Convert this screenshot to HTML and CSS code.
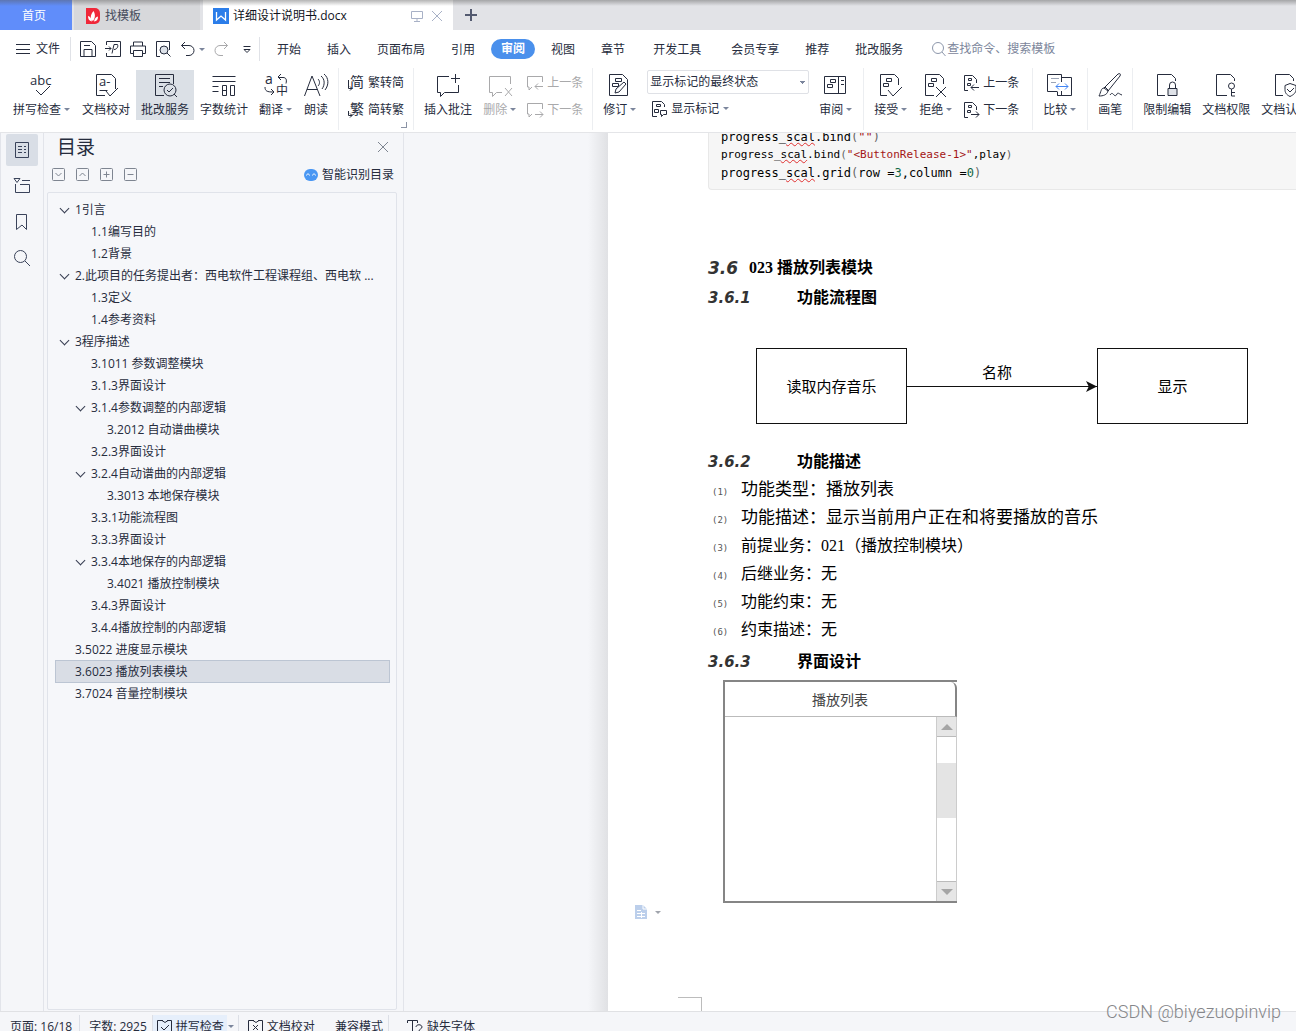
FILE: index.html
```html
<!DOCTYPE html>
<html lang="zh-CN">
<head>
<meta charset="utf-8">
<title>详细设计说明书.docx</title>
<link rel="stylesheet" href="styles.css">
</head>
<body>
<div class="app">
  <header class="tabbar">
    <button class="tab tab-home">首页</button>
    <button class="tab tab-find">
      <svg class="i16" viewBox="0 0 16 16" stroke="none"><path d="M1 0h9a5 5 0 0 1 5 5v6a5 5 0 0 1-5 5H1z" fill="#f0283a" stroke="none"/><path d="M8 13C5 11 5 7 8.500 3c2 3 2 7-.5 10zM7 13.500C4 13 3 11 3 8c2 .5 3.500 2 4 5.500zM9 13.500c.5-3 2-4.500 4-5 0 3-1 4.500-4 5z" fill="#fff" stroke="none"/></svg>
      <span>找模板</span>
    </button>
    <div class="tab tab-doc">
      <svg class="i16" viewBox="0 0 16 16"><path d="M0 0h16v16H0z" fill="#2b7de9" stroke="none"/><path d="M3.500 4v8L8 8l4.500 4V4" fill="none" stroke="#fff" stroke-width="1.300"/></svg>
      <span class="doc-name">详细设计说明书.docx</span>
      <svg class="i12 faint" viewBox="0 0 12 12"><path d="M.5 1.500h11v7H.5zM6 8.500v3M3 11.500h6"/></svg>
      <button class="bare" aria-label="关闭"><svg class="i12 faint" viewBox="0 0 12 12"><path d="M1 1l10 10M11 1L1 11"/></svg></button>
    </div>
    <button class="bare plus" aria-label="新建"><svg class="i12" viewBox="0 0 12 12"><path d="M6 0v12M0 6h12" stroke-width="2"/></svg></button>
  </header>

  <nav class="menubar">
    <button class="file-btn"><svg class="i14" viewBox="0 0 14 14"><path d="M0 2.500h14M0 7.500h14M0 11.500h14"/></svg>文件</button>
    <div class="quick">
      <button class="bare" aria-label="保存"><svg class="i16" viewBox="0 0 16 16"><path d="M.5.5h11l4 4v11H.5zM4 15.500v-7h8v7M4 4.500h6"/></svg></button>
      <button class="bare" aria-label="输出"><svg class="i16" viewBox="0 0 16 16"><path d="M1.500 4V.5h14v15h-14V12M0 7.500h6M4 5.500l2 2-2 2M7 12.500l2-9h3.500c1 2-.5 5-3.500 5"/></svg></button>
      <button class="bare" aria-label="打印"><svg class="i16" viewBox="0 0 16 16"><path d="M3.500 5V1h9v4M3.500 12.500h-3V5h15v7.500h-3M3.500 9.500h9v6h-9z"/></svg></button>
      <button class="bare" aria-label="预览"><svg class="i16" viewBox="0 0 16 16"><path d="M5 15.500H1.500V.5h13V9"/><circle cx="9" cy="9" r="4" fill="#dde2e9"/><path d="M12 12l3.500 3.500"/></svg></button>
      <button class="bare undo" aria-label="撤销"><svg class="i16" viewBox="0 0 16 16"><path d="M5 1L1.500 4.500 5 8M1.500 4.500H9a5 5 0 0 1 0 10H6"/></svg><i class="arr"></i></button>
      <button class="bare dim" aria-label="恢复"><svg class="i16" viewBox="0 0 16 16"><path d="M10 1l3.500 3.500L10 8M13.500 4.500H6a5 5 0 0 0 0 10h3"/></svg></button>
      <button class="bare" aria-label="更多"><svg class="i8" viewBox="0 0 8 8"><path d="M.5 1.500h7M1 4.500l3 3 3-3z"/></svg></button>
    </div>
    <button class="menu">开始</button><button class="menu">插入</button><button class="menu">页面布局</button><button class="menu">引用</button><button class="menu active">审阅</button><button class="menu">视图</button><button class="menu">章节</button><button class="menu spaced">开发工具</button><button class="menu">会员专享</button><button class="menu">推荐</button><button class="menu">批改服务</button>
    <label class="search"><svg class="i16" viewBox="0 0 16 16"><circle cx="7" cy="7" r="5.500"/><path d="M11 11l3.500 4"/></svg><input type="text" placeholder="查找命令、搜索模板" aria-label="查找命令"></label>
  </nav>

  <div class="ribbon">
    <div class="group first">
      <button class="cmd"><svg class="i24" viewBox="0 0 24 24"><text x="0" y="12" font-size="13">abc</text><path d="M6 17l5 5 9-9"/></svg><span>拼写检查<i class="arr"></i></span></button>
      <button class="cmd"><svg class="i24" viewBox="0 0 24 24"><path d="M11 22.500H2.500v-21h15l4 4V16M5.500 17.500h8M12 18l4 5 8-8"/><text x="5" y="13" font-size="13">a-</text></svg><span>文档校对</span></button>
      <button class="cmd on"><svg class="i24" viewBox="0 0 24 24"><path d="M11 22.500H2.500v-21h18V11M6 5.500h11M6 9.500h11M6 13.500h4"/><circle cx="17" cy="17" r="6"/><path d="M14 17l2 2 4-4M21 21l3 3"/></svg><span>批改服务</span></button>
      <button class="cmd"><svg class="i24" viewBox="0 0 24 24"><path d="M.5 3.500h23M.5 8.500h23M.5 13.500h6M.5 18.500h6M10.500 12.500h4v10h-4zM10.500 17.500h4M18.500 12.500h4v10h-4z"/></svg><span>字数统计</span></button>
      <button class="cmd"><svg class="i24" viewBox="0 0 24 24"><text x="1" y="11" font-size="14">a</text><text x="12" y="22" font-size="12">中</text><path d="M17 1l-3 3 3 3M14 4.500h5c3 0 4 2 3 6M1 14c0 4 2 5 8 5M7 16l3 3-3 3"/></svg><span>翻译<i class="arr"></i></span></button>
      <button class="cmd"><svg class="i24" viewBox="0 0 24 24"><path d="M.5 23L8 3l8 20M3 16.500h10.500M14 6c2 2 2 5 0 7M17 3c4 3 4 9 1 13M20 1c5 4 5 11 1 16"/></svg><span>朗读</span></button>
    </div>
    <div class="group corner">
      <div class="stack">
        <button class="mini"><svg class="i16" viewBox="0 0 16 16"><text x="2" y="12" font-size="14">简</text><path d="M.5 5v8.500H4M2 11.500l2 2-2 2"/></svg>繁转简</button>
        <button class="mini"><svg class="i16" viewBox="0 0 16 16"><text x="2" y="12" font-size="14">繁</text><path d="M.5 9v4.500H4M2 11.500l2 2-2 2"/></svg>简转繁</button>
      </div>
    </div>
    <div class="group">
      <button class="cmd"><svg class="i24" viewBox="0 0 24 24"><path d="M13 3.500H1.500v16h3v4l4-4h14V12M15 5.500h9M19.500 1v9"/></svg><span>插入批注</span></button>
      <button class="cmd dim"><svg class="i24" viewBox="0 0 24 24"><path d="M14 19.500H8.500l-4 4v-4h-3v-16h21V11M17 15l7 8M24 15l-7 8"/></svg><span>删除<i class="arr"></i></span></button>
      <div class="stack dim">
        <button class="mini"><svg class="i16" viewBox="0 0 16 16"><path d="M5 12l-3 3v-3H.5V1.500h15V7M16 11.500H8M11 8.500l-3 3 3 3"/></svg>上一条</button>
        <button class="mini"><svg class="i16" viewBox="0 0 16 16"><path d="M5 12l-3 3v-3H.5V1.500h15V7M8 12.500h8M13 9.500l3 3-3 3"/></svg>下一条</button>
      </div>
    </div>
    <div class="group">
      <button class="cmd"><svg class="i24" viewBox="0 0 24 24"><path d="M1.500 1.500h13l5 5v16h-18zM7.500 5.500h6v3h-6zM4.500 10.500h6v3h-6zM7 20l1-4 8-7 2 2-7 8z"/></svg><span>修订<i class="arr"></i></span></button>
      <div class="stack">
        <select class="state" aria-label="显示状态"><option>显示标记的最终状态</option></select>
        <button class="mini mark"><svg class="i16" viewBox="0 0 16 16"><path d="M6 15.500H1.500V.5h9l3 3V6M5.500 3.500h4v2h-4zM3.500 8.500h4v3h-4zM9.500 9.500h6v4h-3l-2 2v-2h-1z"/></svg>显示标记<i class="arr"></i></button>
      </div>
      <button class="cmd"><svg class="i24" viewBox="0 0 24 24"><path d="M.5 3.500h21v17H.5zM14.500 3.500v17M6.500 6.500h5v3h-5zM3.500 11.500h5v3h-5zM17 7.500h3M17 11.500h3"/></svg><span>审阅<i class="arr"></i></span></button>
    </div>
    <div class="group wide">
      <button class="cmd"><svg class="i24" viewBox="0 0 24 24"><path d="M8 22.500H1.500v-21h14l4 4V12M7.500 5.500h5v3h-5zM4.500 10.500h5v3h-5zM9 17l5 6 9-9"/></svg><span>接受<i class="arr"></i></span></button>
      <button class="cmd"><svg class="i24" viewBox="0 0 24 24"><path d="M10 22.500H1.500v-21h14l4 4V11M7.500 5.500h5v3h-5zM4.500 10.500h5v3h-5zM12 14l10 10M22 14L12 24"/></svg><span>拒绝<i class="arr"></i></span></button>
      <div class="stack">
        <button class="mini"><svg class="i16" viewBox="0 0 16 16"><path d="M5 15.500H1.500V.5h8l4 4V8M5.500 3.500h3v2h-3zM4.500 8.500h3v2h-3zM16 12.500H8M11 9.500l-3 3 3 3"/></svg>上一条</button>
        <button class="mini"><svg class="i16" viewBox="0 0 16 16"><path d="M5 15.500H1.500V.5h8l4 4V8M5.500 3.500h3v2h-3zM4.500 8.500h3v2h-3zM8 12.500h8M13 9.500l3 3-3 3"/></svg>下一条</button>
      </div>
    </div>
    <div class="group">
      <button class="cmd"><svg class="i24" viewBox="0 0 24 24"><path d="M9 18.500H-.5v-17h14v21H9.500v-4M13.500 4.500h10v18h-14"/><path d="M10 9h10v9H10z" fill="#fff" stroke="none"/><path d="M3 5.500h8M3 9.500h5" stroke="#9aa3b5"/><path d="M8 13.500h12M11 10.500l-3 3 3 3M17 10.500l3 3-3 3" stroke="#4285f4"/></svg><span>比较<i class="arr"></i></span></button>
    </div>
    <div class="group">
      <button class="cmd"><svg class="i24" viewBox="0 0 24 24"><path d="M6 15L20 1c2-1 3 0 2 2L10 18M6 15c-3 0-3 4-5 8 4 0 8-1 9-5zM7 14l4 4M12 22c2-3 3-1 4 0s2 1 3-1 2 0 5 1"/></svg><span>画笔</span></button>
    </div>
    <div class="group">
      <button class="cmd"><svg class="i24" viewBox="0 0 24 24"><path d="M10 22.500H2.500v-21h14l4 4V8"/><path d="M13 15.500h9v7h-9z" fill="#dfe2e8"/><path d="M14.500 15v-3a3 3 0 0 1 6 0v3"/></svg><span>限制编辑</span></button>
      <button class="cmd"><svg class="i24" viewBox="0 0 24 24"><path d="M13 22.500H2.500v-21h14l4 4V8"/><circle cx="17.500" cy="13" r="3"/><path d="M17.500 16v7H21M17.500 19.500H21"/></svg><span>文档权限</span></button>
      <button class="cmd"><svg class="i24" viewBox="0 0 24 24"><path d="M10 22.500H2.500v-21h14l4 4V8M17 10.500l6 2v4c0 3-2 5-6 7-4-2-5-4-5-7v-4zM14 16l3 3 4-4"/></svg><span>文档认证</span></button>
    </div>
  </div>

  <main class="work">
    <nav class="rail">
      <button class="rail-btn sel" aria-label="目录"><svg class="i16" viewBox="0 0 16 16"><path d="M1.500.5h13v15h-13zM4 4.500h4M10 4.500h2M4 7.500h4M10 7.500h2M4 10.500h4M10 10.500h2"/></svg></button>
      <button class="rail-btn" aria-label="章节"><svg class="i16" viewBox="0 0 16 16"><path d="M0 .5h6l-3 4zM8 2.500h8M1.500 6v8.500h14v-8H6"/></svg></button>
      <button class="rail-btn" aria-label="书签"><svg class="i16" viewBox="0 0 16 16"><path d="M2.500.5h10v15L8 11l-5.500 4.500z"/></svg></button>
      <button class="rail-btn" aria-label="查找"><svg class="i16" viewBox="0 0 16 16"><circle cx="6.500" cy="6.500" r="6"/><path d="M11 11l5 5"/></svg></button>
    </nav>

    <aside class="outline">
      <div class="outline-head"><h1>目录</h1><button class="bare grey" aria-label="关闭目录"><svg class="i12" viewBox="0 0 12 12"><path d="M1 1l10 10M11 1L1 11"/></svg></button></div>
      <div class="outline-tools">
        <button class="bare grey" aria-label="展开"><svg class="i14" viewBox="0 0 14 14"><rect x=".5" y=".5" width="12" height="12" rx="1"/><path d="M3.500 5l3 3 3-3"/></svg></button>
        <button class="bare grey" aria-label="收起"><svg class="i14" viewBox="0 0 14 14"><rect x=".5" y=".5" width="12" height="12" rx="1"/><path d="M3.500 8l3-3 3 3"/></svg></button>
        <button class="bare grey" aria-label="增加"><svg class="i14" viewBox="0 0 14 14"><rect x=".5" y=".5" width="12" height="12" rx="1"/><path d="M3.500 6.500h6M6.500 3.500v6"/></svg></button>
        <button class="bare grey" aria-label="减少"><svg class="i14" viewBox="0 0 14 14"><rect x=".5" y=".5" width="12" height="12" rx="1"/><path d="M3.500 6.500h6"/></svg></button>
        <button class="smart"><svg class="i14" viewBox="0 0 14 14"><rect x="0" y="1" width="14" height="12" rx="6" fill="#4a97f3" stroke="none"/><path d="M2.500 7.500c0-2 3-2 3 0M8.500 7.500c0-2 3-2 3 0" stroke="#fff"/></svg>智能识别目录</button>
      </div>
      <ul class="tree">
        <li class="l1 open">1引言</li>
        <li class="l2">1.1编写目的</li>
        <li class="l2">1.2背景</li>
        <li class="l1 open">2.此项目的任务提出者：西电软件工程课程组、西电软 ...</li>
        <li class="l2">1.3定义</li>
        <li class="l2">1.4参考资料</li>
        <li class="l1 open">3程序描述</li>
        <li class="l2">3.1011 参数调整模块</li>
        <li class="l2">3.1.3界面设计</li>
        <li class="l2 open">3.1.4参数调整的内部逻辑</li>
        <li class="l3">3.2012 自动谱曲模块</li>
        <li class="l2">3.2.3界面设计</li>
        <li class="l2 open">3.2.4自动谱曲的内部逻辑</li>
        <li class="l3">3.3013 本地保存模块</li>
        <li class="l2">3.3.1功能流程图</li>
        <li class="l2">3.3.3界面设计</li>
        <li class="l2 open">3.3.4本地保存的内部逻辑</li>
        <li class="l3">3.4021 播放控制模块</li>
        <li class="l2">3.4.3界面设计</li>
        <li class="l2">3.4.4播放控制的内部逻辑</li>
        <li class="l1">3.5022 进度显示模块</li>
        <li class="l1 current">3.6023 播放列表模块</li>
        <li class="l1">3.7024 音量控制模块</li>
      </ul>
    </aside>

    <div class="gutter"></div>

    <article class="paper">
      <div class="code"><div>progress_<u>scal</u>.bind<em>(</em><b>""</b><em>)</em></div><div class="tight">progress_<u>scal</u>.bind<em>(</em><b>"&lt;ButtonRelease-1&gt;"</b>,play<em>)</em></div><div>progress_<u>scal</u>.grid<em>(</em>row =<s>3</s>,column =<s>0</s><em>)</em></div></div>

      <h2><span class="num">3.6</span>023 播放列表模块</h2>
      <h3><span class="num">3.6.1</span>功能流程图</h3>
      <div class="flow">
        <div class="node">读取内存音乐</div>
        <div class="link"><span>名称</span><svg class="tip" viewBox="0 0 12 12"><path d="M0 0l12 6-12 6 3-6z"/></svg></div>
        <div class="node">显示</div>
      </div>

      <h3 class="next"><span class="num">3.6.2</span>功能描述</h3>
      <ol class="facts">
        <li class="loose"><span>(1)</span>功能类型：播放列表</li>
        <li class="loose"><span>(2)</span>功能描述：显示当前用户正在和将要播放的音乐</li>
        <li><span>(3)</span>前提业务：021（播放控制模块）</li>
        <li><span>(4)</span>后继业务：无</li>
        <li><span>(5)</span>功能约束：无</li>
        <li><span>(6)</span>约束描述：无</li>
      </ol>
      <h3><span class="num">3.6.3</span>界面设计</h3>

      <div class="player">
        <div class="player-title">播放列表</div>
        <div class="player-body">
          <div class="scroll"><div class="cap"><i class="up"></i></div><div class="track"><div class="thumb"></div></div><div class="cap end"><i class="down"></i></div></div>
        </div>
      </div>
      <button class="bare tag" aria-label="粘贴选项"><svg class="i14" viewBox="0 0 14 14"><path d="M1 0h8l4 4v10H1z" fill="#bccfeb" stroke="none"/><path d="M9 0v4h4M3 5.500h4M3 8.500h8M3 11.500h8M7.500 7v6" stroke="#fff"/></svg><i class="arr"></i></button>
      <div class="crop"></div>
    </article>
  </main>

  <footer class="status">
    <span class="st first">页面: 16/18</span>
    <span class="st">字数: 2925</span>
    <button class="st spell"><svg class="i16" viewBox="0 0 16 16"><path d="M6 1.500H.5v14h14v-14H10M5 1.500l3 2 3-2M4 8l3 3 5-5"/></svg>拼写检查</button>
    <i class="arr st-arr"></i>
    <button class="st proof"><svg class="i16" viewBox="0 0 16 16"><path d="M6 1.500H.5v14h14v-14H10M5 1.500l3 2 3-2M5 6l5 5M10 6l-5 5"/></svg>文档校对</button>
    <span class="st mode">兼容模式</span>
    <button class="st fonts"><svg class="i16" viewBox="0 0 16 16"><path d="M.5 4V1.500h10V4M5.500 1.500v13H4M9 8c0-3 6-3 6 0 0 2-3 2-3 4M12 13v2"/></svg>缺失字体</button>
  </footer>
  <div class="watermark">CSDN @biyezuopinvip</div>
</div>
</body>
</html>
```

FILE: styles.css
```css
* { box-sizing: border-box; }
html { height: 100%; overflow: hidden; }
body {
  margin: 0;
  height: 100%;
  overflow: hidden;
  font: 12px/16px "Open Sans", "Noto Sans CJK SC", sans-serif;
  color: #262c3d;
}
button, input, select { font: inherit; color: inherit; }
button { border: 0; padding: 0; background: none; white-space: nowrap; }
svg { display: block; flex: none; fill: none; stroke: currentColor; stroke-width: 1; overflow: visible; }
svg text { fill: currentColor; stroke: none; }
.i8 { width: 8px; height: 8px; }
.i12 { width: 12px; height: 12px; }
.i14 { width: 14px; height: 14px; }
.i16 { width: 16px; height: 16px; }
.i24 { width: 24px; height: 24px; }
.bare { display: flex; align-items: center; }
.grey { color: #7e8591; }
.faint { color: #a8b1c6; }
.dim { color: #a9a9ab; }
.arr {
  display: inline-block;
  flex: none;
  border: 3px solid transparent;
  border-top-color: #7b859c;
  border-bottom: 0;
}

/* the status bar runs a little below the window edge */
.app { position: relative; display: flex; flex-direction: column; height: calc(100vh + 10px); }

/* document tabs */
.tabbar {
  flex: none;
  display: flex;
  height: 30px;
  background: #e2e3e7;
  position: relative;
}
.tabbar::after {
  content: "";
  position: absolute;
  inset: 0 0 auto 0;
  height: 6px;
  background: linear-gradient(rgba(90, 90, 90, .45), rgba(90, 90, 90, 0));
}
.tab { display: flex; align-items: center; gap: 4px; height: 30px; padding-top: 2px; }
.tab-home { width: 72px; justify-content: center; padding-right: 4px; background: #608dfa; color: #fff; }
.tab-find { width: 126px; margin-left: 2px; padding-left: 11px; background: #d7d8db; color: #454b5b; }
.tab-doc { width: 250px; margin-left: 3px; padding: 2px 10px 0; background: #fff; color: #10131c; }
.tab-doc .bare { margin-left: 4px; }
.doc-name { flex: 1; }
.plus { padding: 0 12px; color: #535a70; }

/* menu row */
.menubar { flex: none; display: flex; align-items: center; height: 38px; background: #fff; }
.file-btn { display: flex; align-items: center; gap: 6px; padding: 0 10px 0 16px; height: 24px; border-right: 1px solid #e0e2e7; }
.quick { display: flex; align-items: center; gap: 9px; padding: 0 8px 0 9px; border-right: 1px solid #e0e2e7; height: 24px; }
.undo { gap: 3px; }
.quick .bare:last-child { margin: 0 0 0 4px; }
.menu { padding: 2px 13px 0; }
.quick + .menu { margin-left: 4px; }
.menu.active { margin: 0 3px; padding: 0 10px; height: 20px; border-radius: 10px; background: #4a90ec; color: #fff; font-weight: 700; }
.menu.spaced { margin: 0 4px 0 2px; }
.search { display: flex; align-items: center; margin-left: 15px; color: #8d97ab; }
.search input { width: 130px; padding: 0; border: 0; background: none; outline: 0; }
.search input::placeholder { color: #7c869b; opacity: 1; }

/* ribbon */
.ribbon { flex: none; display: flex; height: 64px; background: #fff; overflow: hidden; }
.group { flex: none; display: flex; gap: 1px; padding: 2px 5px 0; height: 62px; border-right: 1px solid #eceef1; }
.group.first { padding-left: 8px; }
.group.wide { padding-right: 9px; }
.group.corner { position: relative; }
.group.corner::after { content: ""; position: absolute; right: 6px; bottom: 2px; width: 5px; height: 5px; border: solid #8b93a5; border-width: 0 1px 1px 0; }
.group:last-child { border: 0; }
.cmd { display: flex; flex-direction: column; align-items: center; gap: 5px; height: 50px; padding: 3px 5px 0; }
.cmd.on { background: #dbe0e6; }
.cmd .arr { margin: 0 1px 3px 3px; }
.stack { display: flex; flex-direction: column; gap: 2px; padding: 0 4px; }
.mini { display: flex; align-items: center; gap: 4px; height: 25px; }
.mark { padding-left: 4px; }
.state {
  --arrow: #7b859c;
  width: 162px;
  height: 24px;
  padding: 0 2px;
  border: 1px solid #dfe1e6;
  border-radius: 2px;
  appearance: none;
  background-color: #fff;
  background-image: linear-gradient(45deg, transparent 50%, var(--arrow) 50%), linear-gradient(-45deg, transparent 50%, var(--arrow) 50%);
  background-position: right 6px center, right 3px center;
  background-size: 3px 3px;
  background-repeat: no-repeat;
}

/* workspace */
.work { flex: 1; min-height: 0; display: flex; background: #f5f6f9; border-top: 1px solid #e4e5e8; }
.rail { flex: none; display: flex; flex-direction: column; gap: 4px; width: 44px; padding: 1px 5px; border: solid #e2e4ea; border-width: 0 1px; }
.rail-btn { display: flex; align-items: center; justify-content: center; width: 32px; height: 32px; border-radius: 2px; color: #3a435a; }
.rail-btn.sel { background: #d9dee6; }
.outline { flex: none; display: flex; flex-direction: column; width: 360px; padding: 0 6px 1px 3px; border-right: 1px solid #e2e4ea; }
.outline-head { display: flex; align-items: center; justify-content: space-between; height: 28px; padding: 0 8px 0 10px; }
h1 { margin: 0; font-size: 19px; line-height: 28px; font-weight: 400; }
.outline-tools { display: flex; align-items: center; gap: 10px; height: 28px; padding: 0 3px 1px 5px; }
.smart { display: flex; align-items: center; gap: 4px; margin-left: auto; }
.tree { flex: 1; margin: 3px 0 0; padding: 5px 6px 5px 7px; list-style: none; border: 1px solid #e0e3ea; border-radius: 2px; background: #f6f7fa; }
.tree li { position: relative; height: 22px; line-height: 22px; white-space: nowrap; border: 1px solid transparent; }
.tree .l1 { padding-left: 19px; }
.tree .l2 { padding-left: 35px; }
.tree .l3 { padding-left: 51px; }
.tree .current { height: 23px; margin-bottom: -1px; background: #d9dde5; border-color: #bcc5d3; }
.tree .open::before {
  content: "";
  position: absolute;
  top: 6px;
  margin-left: -14px;
  width: 6px;
  height: 6px;
  border: solid #363d50;
  border-width: 0 1px 1px 0;
  transform: rotate(45deg);
}
.gutter { flex: none; width: 204px; background: linear-gradient(90deg, rgba(224, 225, 228, 0) 184px, #e0e1e4); }

/* document page */
.paper {
  position: relative;
  flex: 1;
  min-width: 0;
  padding-left: 100px;
  overflow: hidden;
  background: #fff;
  color: #000;
  font: 16px/28px "Liberation Serif", "Noto Sans CJK SC", serif;
}
.code {
  margin-top: -10px;
  padding: 4px 0 7px 12px;
  border: 1px solid #e8e8e8;
  border-right: 0;
  border-radius: 4px 0 0 4px;
  background: #f6f6f6;
  font: 12px/18px "DejaVu Sans Mono", monospace;
  white-space: pre;
}
.tight { font-size: 11px; }
.code b { font-weight: 400; color: #a31515; }
.code em { font-style: normal; color: #666; }
.code s { text-decoration: none; color: #116644; }
.code u { text-decoration: underline wavy #e03030 1px; text-underline-offset: 1px; }
h2, h3 { display: flex; margin: 0; font-size: 16px; line-height: 30px; font-weight: 700; }
h2 { margin-top: 63px; }
.num { width: 89px; color: #333; font: italic 700 15px/30px "DejaVu Sans", sans-serif; }
h2 .num { width: 41px; font-size: 17px; }
.flow { display: flex; margin: 35px 0 0 48px; font: 15px/20px "Noto Sans CJK SC", sans-serif; }
.node { display: flex; align-items: center; justify-content: center; width: 151px; height: 76px; border: 1px solid #111; }
.link { position: relative; width: 190px; height: 39px; padding-top: 14px; padding-right: 10px; text-align: center; border-bottom: 1px solid #111; }
.tip { position: absolute; right: 0; bottom: -6px; width: 11px; height: 11px; fill: #111; stroke: none; }
.next { margin-top: 23px; }
.facts { margin: -1px 0 3px; padding: 0 0 0 4px; list-style: none; }
.facts li { display: flex; height: 28px; white-space: nowrap; }
.facts span { width: 29px; color: #555; font: 9px/32px "DejaVu Sans Mono", monospace; }
.facts .loose { font-size: 17px; }
.player { width: 234px; margin: 3px 0 0 15px; border: solid #858585; border-width: 2px 0 2px 2px; }
.player-title { height: 35px; border: solid #bbb; border-width: 0 2px 1px 0; border-right-color: #858585; border-radius: 0 6px 0 0; text-align: center; color: #444; font: 14px/34px "Noto Sans CJK SC", sans-serif; }
.player-body { display: flex; justify-content: flex-end; height: 184px; }
.scroll { display: flex; flex-direction: column; width: 21px; border: 1px solid #ccc; border-width: 0 1px; }
.cap { display: flex; align-items: center; justify-content: center; height: 20px; background: #e6e6e6; border-bottom: 1px solid #bbb; }
.cap.end { border-top: 1px solid #bbb; border-bottom: 0; }
.up, .down { border: 6px solid transparent; }
.up { border-top: 0; border-bottom-color: #a5a5a5; }
.down { border-bottom: 0; border-top-color: #a5a5a5; }
.track { flex: 1; padding-top: 26px; }
.thumb { height: 55px; background: #e4e4e4; }
.tag { position: absolute; left: 26px; top: 772px; gap: 7px; }
.tag .arr { border-top-color: #a0a4ac; }
.crop { position: absolute; left: 70px; bottom: 0; width: 24px; height: 14px; border: solid #bcbcbc; border-width: 1px 1px 0 0; }

/* status bar */
.status { flex: none; display: flex; align-items: center; height: 30px; background: #f5f6f9; border-top: 1px solid #e0e1e4; white-space: nowrap; }
.st { display: flex; align-items: center; gap: 4px; height: 24px; padding: 0 5px 0 9px; border-right: 1px solid #dcdfe6; }
.st.first { padding: 0 7px 0 10px; }
.spell { padding: 0 3px 0 4px; gap: 3px; border: 0; background: #e6effb; }
.st-arr { margin: 0 4px 0 1px; }
.proof { padding-left: 9px; gap: 3px; border-left: 1px solid #dcdfe6; border-right: 0; }
.mode { padding-left: 15px; }
.fonts { padding-left: 18px; border: 0; }
.watermark { position: absolute; right: 15px; bottom: 18px; color: #85868a; font: 300 18px/22px Roboto, sans-serif; }
```
